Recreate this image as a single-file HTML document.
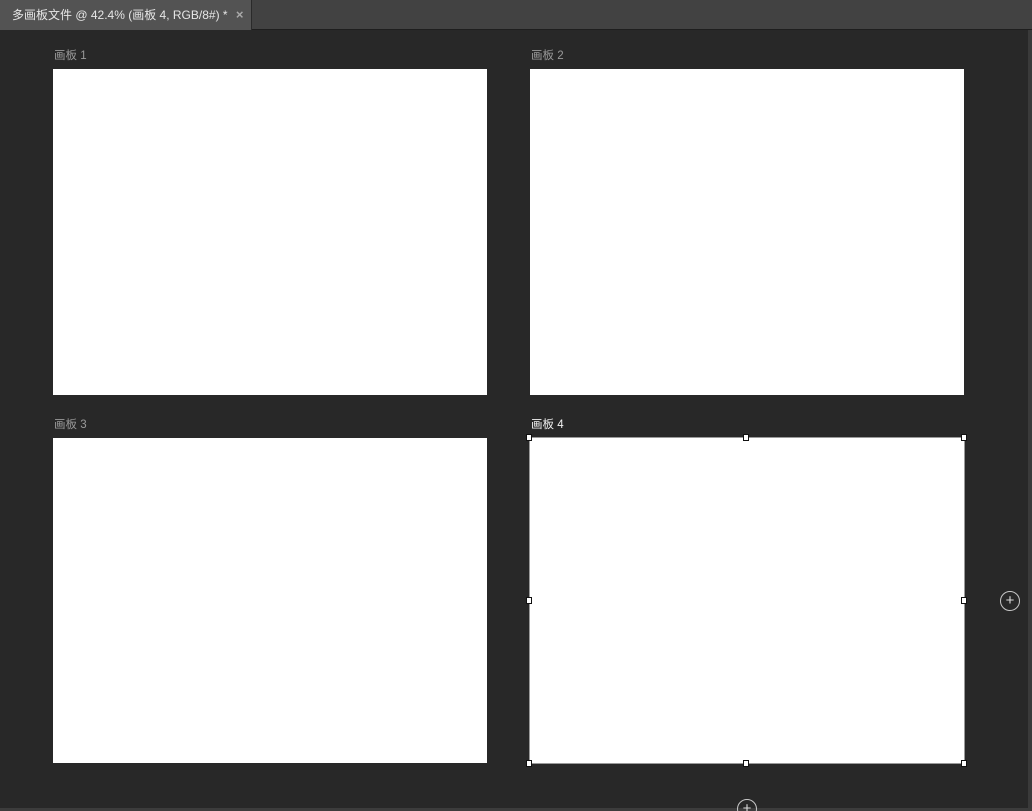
<!DOCTYPE html>
<html style="width:1032px;height:811px;overflow:hidden"><head><meta charset="utf-8"><style>
*{margin:0;padding:0;box-sizing:border-box}
body{width:1032px;height:811px;background:#282828;position:relative;overflow:hidden;font-family:"Liberation Sans","Noto Sans CJK SC",sans-serif}
.bar{position:absolute;left:0;top:0;width:1032px;height:30px;background:#424242;border-bottom:1px solid #1e1e1e}
.tab{position:absolute;left:0;top:0;width:252px;height:30px;background:#535353;border-right:1px solid #2a2a2a;color:#e6e6e6;font-size:12px;line-height:30px;padding-left:12px;white-space:nowrap}
.tab .x{color:#aaa;margin-left:5px;font-size:13px;font-weight:bold}
.ab{position:absolute;background:#fff;width:434px;height:326px}
.lbl{position:absolute;color:#9a9a9a;font-size:11.5px}
.h{position:absolute;width:6px;height:7px;background:#fff;border:1px solid #111}
.plus{position:absolute;width:20px;height:20px;border:1.5px solid #c8c8c8;border-radius:50%;color:#ddd;font-size:15px;line-height:17px;text-align:center}
.rb{position:absolute;right:0;top:30px;width:4px;height:781px;background:#3a3a3a}
.bb{position:absolute;left:0;top:808px;width:1032px;height:3px;background:#3c3c3c}
</style></head><body>
<div class="bar"><div class="tab">多画板文件 @ 42.4% (画板 4, RGB/8#) * <span class="x">×</span></div></div>
<div class="lbl" style="left:54px;top:47px">画板 1</div>
<div class="lbl" style="left:531px;top:47px">画板 2</div>
<div class="lbl" style="left:54px;top:416px">画板 3</div>
<div class="lbl" style="left:531px;top:416px;color:#f2f2f2">画板 4</div>
<div class="ab" style="left:53px;top:69px"></div>
<div class="ab" style="left:530px;top:69px"></div>
<div class="ab" style="left:53px;top:438px;height:325px"></div>
<div class="ab" style="left:529px;top:437px;width:436px;height:327px;border:1px solid #9a9a9a"></div>
<div class="h" style="left:526px;top:434px"></div>
<div class="h" style="left:743px;top:434px"></div>
<div class="h" style="left:961px;top:434px"></div>
<div class="h" style="left:526px;top:597px"></div>
<div class="h" style="left:961px;top:597px"></div>
<div class="h" style="left:526px;top:760px"></div>
<div class="h" style="left:743px;top:760px"></div>
<div class="h" style="left:961px;top:760px"></div>
<div class="plus" style="left:1000px;top:591px">+</div>
<div class="rb"></div>
<div class="bb"></div>
<div class="plus" style="left:737px;top:799px">+</div>
</body></html>
